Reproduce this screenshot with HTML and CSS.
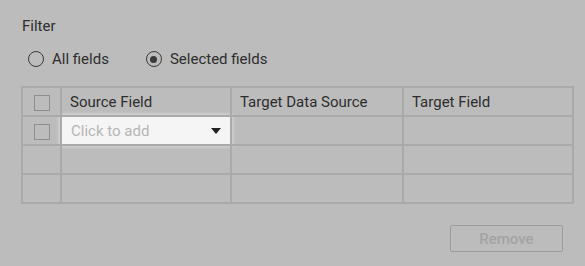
FILE: index.html
```html
<!DOCTYPE html>
<html lang="en">
<head>
  <meta charset="UTF-8">
  <title>Filter</title>
  <link rel="stylesheet" href="styles.css">
</head>
<body>
  <div class="panel">
    <div class="title">Filter</div>
    <div class="radios">
      <label class="radio"><span class="dot"></span>All fields</label>
      <label class="radio"><span class="dot on"></span>Selected fields</label>
    </div>
    <table class="grid">
      <colgroup>
        <col class="w-chk">
        <col class="w-src">
        <col class="w-ds">
        <col class="w-tf">
      </colgroup>
      <tr class="head">
        <td class="chk"><span class="box"></span></td>
        <td>Source Field</td>
        <td>Target Data Source</td>
        <td>Target Field</td>
      </tr>
      <tr>
        <td class="chk"><span class="box"></span></td>
        <td class="pick"><div class="combo"><span>Click to add</span><span class="arrow"></span></div></td>
        <td></td>
        <td></td>
      </tr>
      <tr><td class="chk"></td><td></td><td></td><td></td></tr>
      <tr><td class="chk"></td><td></td><td></td><td></td></tr>
    </table>
    <div class="actions">
      <button class="remove">Remove</button>
    </div>
  </div>
</body>
</html>
```

FILE: styles.css
```css
html, body {
  margin: 0;
  background: #bcbcbc;
}
body {
  width: 585px;
  height: 266px;
  overflow: hidden;
  font-family: Roboto, "Liberation Sans", sans-serif;
  color: #2e2e2e;
}
.panel {
  padding: 16px 13px 0 21px;
}
.title {
  font-size: 15px;
  line-height: 20px;
  margin-left: 1px;
}
.radios {
  display: flex;
  gap: 37px;
  margin-top: 14px;
  margin-left: 7px;
  height: 18px;
  align-items: center;
}
.radio {
  display: flex;
  align-items: center;
  gap: 8px;
  font-size: 15px;
}
.dot {
  width: 14px;
  height: 14px;
  border: 1.5px solid #3a3a3a;
  border-radius: 50%;
  position: relative;
}
.dot.on::after {
  content: "";
  position: absolute;
  left: 3.5px;
  top: 3.5px;
  width: 7px;
  height: 7px;
  border-radius: 50%;
  background: #3a3a3a;
}
.grid {
  margin-top: 18px;
  width: 551px;
  table-layout: fixed;
  border-collapse: collapse;
  border: 2px solid #a7a7a7;
  font-size: 15px;
}
.w-chk { width: 39px; }
.w-src { width: 170px; }
.w-ds { width: 172px; }
.w-tf { width: 170px; }
.grid td {
  border: 2px solid #aaaaaa;
  height: 27px;
  padding: 0 8px;
  box-sizing: border-box;
}
.grid tr {
  height: 29px;
}
.grid .chk {
  text-align: center;
  padding: 0;
}
.box {
  display: inline-block;
  width: 14px;
  height: 14px;
  border: 1px solid #8e8e8e;
  vertical-align: middle;
}
.grid .pick {
  padding: 0;
}
.combo {
  display: flex;
  justify-content: space-between;
  align-items: center;
  background: #f5f5f5;
  height: 27px;
  padding: 0 9px 0 9px;
  color: #b5b5b5;
  box-shadow: 0 0 4px 2px rgba(240, 240, 240, 0.8);
}
.arrow {
  width: 0;
  height: 0;
  border-left: 5px solid transparent;
  border-right: 5px solid transparent;
  border-top: 6px solid #222;
}
.actions {
  display: flex;
  justify-content: flex-end;
  margin-top: 21px;
  padding-right: 9px;
}
.remove {
  width: 113px;
  height: 27px;
  background: transparent;
  border: 1px solid #9c9c9c;
  border-radius: 2px;
  color: #a3a3a3;
  font-family: Roboto, "Liberation Sans", sans-serif;
  font-size: 15px;
  font-weight: 500;
}
```
